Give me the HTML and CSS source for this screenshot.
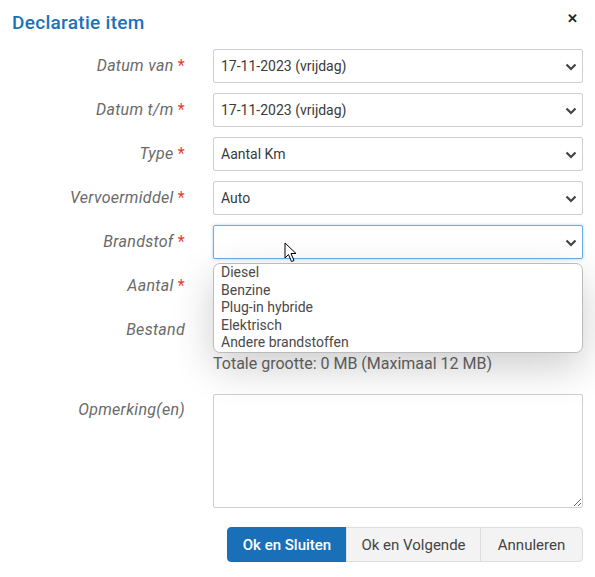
FILE: index.html
```html
<!DOCTYPE html>
<html lang="nl">
<head>
    <meta charset="UTF-8">
    <meta name="viewport" content="width=device-width, initial-scale=1.0">
    <link rel="stylesheet" href="styles.css">
    <title>Declaratie item</title>
</head>
<body>
    <div class="modal">
        <div class="modal-header">
            <h2 class="modal-title">Declaratie item</h2>
            <span class="close">&#x2715;</span>
        </div>

        <form class="form">
            <label class="lbl">Datum van <span class="req">*</span></label>
            <div class="select-wrap">
                <select class="ctrl"><option>17-11-2023 (vrijdag)</option></select>
                <svg class="chev" width="12" height="8" viewBox="0 0 12 8"><path d="M1.5 1.5 L6 6 L10.5 1.5" fill="none" stroke="#444" stroke-width="2.2"/></svg>
            </div>

            <label class="lbl">Datum t/m <span class="req">*</span></label>
            <div class="select-wrap">
                <select class="ctrl"><option>17-11-2023 (vrijdag)</option></select>
                <svg class="chev" width="12" height="8" viewBox="0 0 12 8"><path d="M1.5 1.5 L6 6 L10.5 1.5" fill="none" stroke="#444" stroke-width="2.2"/></svg>
            </div>

            <label class="lbl">Type <span class="req">*</span></label>
            <div class="select-wrap">
                <select class="ctrl"><option>Aantal Km</option></select>
                <svg class="chev" width="12" height="8" viewBox="0 0 12 8"><path d="M1.5 1.5 L6 6 L10.5 1.5" fill="none" stroke="#444" stroke-width="2.2"/></svg>
            </div>

            <label class="lbl">Vervoermiddel <span class="req">*</span></label>
            <div class="select-wrap">
                <select class="ctrl"><option>Auto</option></select>
                <svg class="chev" width="12" height="8" viewBox="0 0 12 8"><path d="M1.5 1.5 L6 6 L10.5 1.5" fill="none" stroke="#444" stroke-width="2.2"/></svg>
            </div>

            <label class="lbl">Brandstof <span class="req">*</span></label>
            <div class="select-wrap open">
                <select class="ctrl focus"><option></option></select>
                <svg class="chev" width="12" height="8" viewBox="0 0 12 8"><path d="M1.5 1.5 L6 6 L10.5 1.5" fill="none" stroke="#444" stroke-width="2.2"/></svg>
                <!-- open dropdown -->
                <ul class="dropdown">
                    <li>Diesel</li>
                    <li>Benzine</li>
                    <li>Plug-in hybride</li>
                    <li>Elektrisch</li>
                    <li>Andere brandstoffen</li>
                </ul>
                <svg class="cursor" width="14" height="21" viewBox="0 0 14 21"><path d="M1 1 L1 16 L4.5 12.5 L7.5 19.5 L10 18.5 L7 11.5 L12 11.5 Z" fill="#fff" stroke="#000" stroke-width="1"/></svg>
            </div>

            <label class="lbl">Aantal <span class="req">*</span></label>
            <input class="ctrl" type="text">

            <label class="lbl">Bestand</label>
            <div>
                <div class="ctrl file"></div>
                <p class="hint">Totale grootte: 0 MB (Maximaal 12 MB)</p>
            </div>

            <label class="lbl lbl-top">Opmerking(en)</label>
            <textarea class="ctrl area"></textarea>
        </form>

        <div class="buttons">
            <button class="btn primary">Ok en Sluiten</button>
            <button class="btn next">Ok en Volgende</button>
            <button class="btn cancel">Annuleren</button>
        </div>
    </div>
</body>
</html>
```

FILE: styles.css
```css
*{
    box-sizing: border-box;
    font-family: Roboto, "Liberation Sans", sans-serif;
}
body{
    margin: 0;
    background: #fff;
    color: #333;
}
.modal{
    width: 595px;
    padding: 0 12px 0 12px;
}
.modal-header{
    display: flex;
    justify-content: space-between;
    align-items: center;
    height: 49px;
    padding-bottom: 4px;
}
.modal-title{
    margin: 0;
    font-size: 19px;
    font-weight: 500;
    color: #1b72b9;
    letter-spacing: 0.3px;
}
.close{
    font-size: 13px;
    font-weight: bold;
    color: #222;
    margin-right: 5px;
    margin-top: -8px;
}

.form{
    display: grid;
    grid-template-columns: 173px 370px;
    column-gap: 28px;
    row-gap: 10px;
    align-items: start;
}
.lbl{
    text-align: right;
    font-style: italic;
    font-size: 16px;
    letter-spacing: 0.3px;
    color: #6a6a6a;
    line-height: 34px;
}
.req{
    color: #e53935;
    font-style: normal;
}
.select-wrap{
    position: relative;
}
.ctrl{
    display: block;
    width: 370px;
    height: 34px;
    border: 1px solid #cfcfcf;
    border-radius: 2px;
    background: #fff;
    font-size: 14px;
    color: #3a3a3a;
    padding: 0 7px;
    outline: none;
}
select.ctrl{
    appearance: none;
    -webkit-appearance: none;
}
.ctrl.focus{
    border-color: #69aee8;
    box-shadow: 0 0 3px rgba(60, 150, 230, 0.45);
}
.chev{
    position: absolute;
    right: 6px;
    top: 14px;
}
.dropdown{
    position: absolute;
    z-index: 2;
    top: 38px;
    left: 0;
    width: 370px;
    height: 90px;
    margin: 0;
    padding: 0 7px;
    list-style: none;
    background: #fff;
    border: 1px solid #bbb;
    border-radius: 7px;
    box-shadow: 0 14px 40px rgba(0, 0, 0, 0.2);
}
.dropdown li{
    font-size: 14px;
    line-height: 17.6px;
    color: #4a4a4a;
}
.cursor{
    position: absolute;
    z-index: 3;
    left: 71px;
    top: 17px;
}
.file{
    height: 34px;
}
.hint{
    margin: 7px 0 0 0;
    font-size: 16px;
    color: #666;
}
.area{
    height: 114px;
    margin-top: 11px;
    resize: vertical;
}
.lbl-top{
    margin-top: 11px;
    line-height: 32px;
}

.buttons{
    display: flex;
    justify-content: flex-end;
    margin-top: 19px;
}
.btn{
    height: 35px;
    border: 1px solid #ddd;
    background: #f3f3f3;
    color: #444;
    font-size: 15px;
    padding: 0;
    margin-left: -1px;
}
.btn.primary{
    width: 120px;
    border-radius: 4px 0 0 4px;
    background: #1a70b8;
    border-color: #1a70b8;
    color: #fff;
    font-weight: 500;
}
.btn.next{
    width: 135px;
}
.btn.cancel{
    width: 103px;
    border-radius: 0 4px 4px 0;
}
```
